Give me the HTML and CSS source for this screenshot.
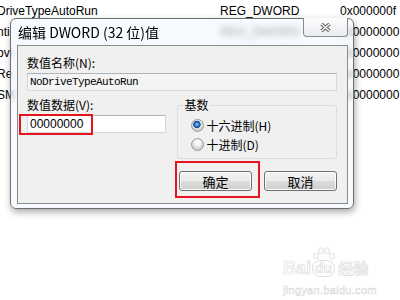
FILE: index.html
```html
<!DOCTYPE html>
<html lang="zh-CN">
<head>
    <meta charset="UTF-8">
    <title>编辑 DWORD (32 位)值</title>
    <link rel="stylesheet" href="styles.css">
</head>
<body>

    <div class="list">
        <div class="row"><span>DriveTypeAutoRun</span><span>REG_DWORD</span><span>0x000000f</span></div>
        <div class="row"><span>nti</span><span>REG_DWORD</span><span>0x0000000</span></div>
        <div class="row"><span>ovi</span><span>REG_DWORD</span><span>0x0000000</span></div>
        <div class="row"><span>Re</span><span>REG_DWORD</span><span>0x0000000</span></div>
        <div class="row"><span>SM</span><span>REG_DWORD</span><span>0x0000000</span></div>
    </div>

    <div class="dialog">
        <div class="titlebar">
            <span class="title">编辑 DWORD (32 位)值</span>
            <div class="close">
                <svg width="13" height="11" viewBox="0 0 13 11">
                    <path d="M2.5 2 L10.5 9 M10.5 2 L2.5 9" stroke="#5c5c5c" stroke-width="3.6" fill="none"/>
                    <path d="M2.5 2 L10.5 9 M10.5 2 L2.5 9" stroke="#fafafa" stroke-width="1.5" fill="none"/>
                </svg>
            </div>
        </div>

        <div class="client">
            <label class="label">数值名称(N):</label>
            <div class="field name">NoDriveTypeAutoRun</div>

            <div class="lower">
                <div class="data-col">
                    <label class="label">数值数据(V):</label>
                    <div class="field data">00000000</div>
                </div>
                <fieldset class="base">
                    <legend>基数</legend>
                    <div class="radio-row"><span class="radio on"></span>十六进制(H)</div>
                    <div class="radio-row"><span class="radio"></span>十进制(D)</div>
                </fieldset>
            </div>

            <div class="buttons">
                <button class="btn">确定</button>
                <button class="btn">取消</button>
            </div>
        </div>
    </div>

    <div class="mark mark-data"></div>
    <div class="mark mark-ok"></div>

    <div class="watermark">
        <div class="wm-top">
            <span>Bai</span>
            <span class="paw">
                <svg class="toes" width="24" height="14" viewBox="0 0 24 14">
                    <ellipse cx="4" cy="9" rx="2.6" ry="3" />
                    <ellipse cx="9" cy="4" rx="2.6" ry="3.2" />
                    <ellipse cx="15" cy="4" rx="2.6" ry="3.2" />
                    <ellipse cx="20" cy="9" rx="2.6" ry="3" />
                </svg>
                du
            </span>
            <span>经验</span>
        </div>
        <div class="wm-url">jingyan.baidu.com</div>
    </div>

</body>
</html>
```

FILE: styles.css
```css
body {
    margin: 0;
    width: 400px;
    height: 300px;
    overflow: hidden;
    position: relative;
    background: #fff;
    color: #000;
    font-family: "Liberation Sans", Arial, sans-serif;
    font-size: 12px;
}

/* registry list behind the dialog */
.list {
    margin-left: -3px;
    padding-top: 1px;
}

.row {
    display: grid;
    grid-template-columns: 223px 120px 1fr;
    height: 21px;
    line-height: 21px;
    white-space: nowrap;
}

/* dialog window */
.dialog {
    position: absolute;
    left: 10px;
    top: 18px;
    width: 342px;
    height: 189px;
    border: 1px solid #6f6f6f;
    border-radius: 6px;
    background: rgba(242, 247, 253, 0.65);
    backdrop-filter: blur(3px);
    box-shadow: 1px 3px 7px rgba(0, 0, 0, 0.35);
    display: flex;
    flex-direction: column;
    font-family: "Noto Sans CJK SC", sans-serif;
}

.titlebar {
    height: 26px;
    display: flex;
    align-items: center;
    padding-left: 7px;
}

.title {
    font-size: 14px;
}

.close {
    align-self: flex-start;
    margin-top: -1px;
    margin-left: auto;
    margin-right: 5px;
    width: 45px;
    height: 19px;
    box-sizing: border-box;
    border: 1px solid #8c8c8c;
    border-top: none;
    border-radius: 0 0 4px 4px;
    background: linear-gradient(#fdfdfd, #e9ebee);
    display: flex;
    align-items: center;
    justify-content: center;
}

.client {
    flex: 1;
    margin: 0 5px 4px 6px;
    border: 1px solid #8b8b8b;
    background: #f0f0f0;
    padding: 9px 10px 0 9px;
}

.label {
    display: block;
    font-size: 12px;
    line-height: 16px;
}

.field {
    margin-top: 2px;
    height: 18px;
    box-sizing: border-box;
    border: 1px solid #d0d8e0;
    border-top-color: #abb4bd;
    padding-left: 2px;
    line-height: 16px;
    white-space: nowrap;
}

.name {
    background: #f4f4f4;
    font-family: "Liberation Mono", monospace;
    font-size: 11px;
    letter-spacing: -0.6px;
}

.data {
    background: #fff;
    font-family: "Liberation Sans", Arial, sans-serif;
    font-size: 12px;
}

.lower {
    display: flex;
    align-items: flex-start;
    gap: 11px;
    margin-top: 6px;
}

.data-col {
    width: 139px;
}

.base {
    width: 161px;
    box-sizing: border-box;
    margin: 0;
    padding: 3px 0 4px 0;
    border: 1px solid #d5dfe5;
    border-radius: 3px;
}

.base legend {
    margin-left: 5px;
    padding: 0 2px;
    font-size: 12px;
    line-height: 16px;
}

.radio-row {
    display: flex;
    align-items: center;
    gap: 3px;
    height: 19px;
    padding-left: 13px;
    font-size: 12px;
}

.radio {
    width: 13px;
    height: 13px;
    box-sizing: border-box;
    border-radius: 50%;
    border: 1px solid #9a9a9a;
    background: radial-gradient(circle at 50% 35%, #ffffff 0, #f2f2f2 3px, #cfcfcf 6px);
}

.radio.on {
    background:
        radial-gradient(circle at 45% 40%, #8fd0ff 0, #2b7fd0 2px, #18448f 3.4px, transparent 4px),
        radial-gradient(circle at 50% 35%, #ffffff 0, #f2f2f2 3px, #cfcfcf 6px);
}

.buttons {
    display: flex;
    justify-content: flex-end;
    gap: 12px;
    margin-top: 12px;
}

.btn {
    width: 73px;
    height: 20px;
    box-sizing: border-box;
    padding: 0;
    border: 1px solid #707070;
    border-radius: 3px;
    background: linear-gradient(#f2f2f2 0, #ebebeb 50%, #dddddd 50%, #cfcfcf 100%);
    box-shadow: inset 0 0 0 1px #fcfcfc;
    font-family: "Noto Sans CJK SC", sans-serif;
    font-size: 13px;
    line-height: 17px;
    color: #000;
}

/* red annotation boxes */
.mark {
    position: absolute;
    box-sizing: border-box;
    border: 2px solid #e3161d;
}

.mark-data {
    left: 19px;
    top: 114px;
    width: 74px;
    height: 21px;
}

.mark-ok {
    left: 175px;
    top: 161px;
    width: 85px;
    height: 37px;
}

/* watermark */
.watermark {
    position: absolute;
    left: 283px;
    top: 258px;
    color: #fcfcfc;
    -webkit-text-stroke: 0.7px #dedede;
    font-family: "Liberation Sans", Arial, sans-serif;
}

.wm-top {
    display: flex;
    align-items: center;
    gap: 1px;
    font-size: 18px;
    font-weight: bold;
    line-height: 20px;
}

.wm-top span:last-child {
    font-family: "Noto Sans CJK SC", sans-serif;
    font-size: 15px;
    margin-left: 2px;
}

.paw {
    position: relative;
    padding: 0 2px;
    border: 1px solid #dedede;
    border-radius: 8px;
    font-size: 14px;
    line-height: 15px;
}

.toes {
    position: absolute;
    left: -1px;
    top: -14px;
    fill: #fcfcfc;
    stroke: #dedede;
    stroke-width: 0.8;
}

.wm-url {
    margin-top: 6px;
    font-size: 11px;
    letter-spacing: 0.3px;
    -webkit-text-stroke: 0.5px #d8d8d8;
}
```
